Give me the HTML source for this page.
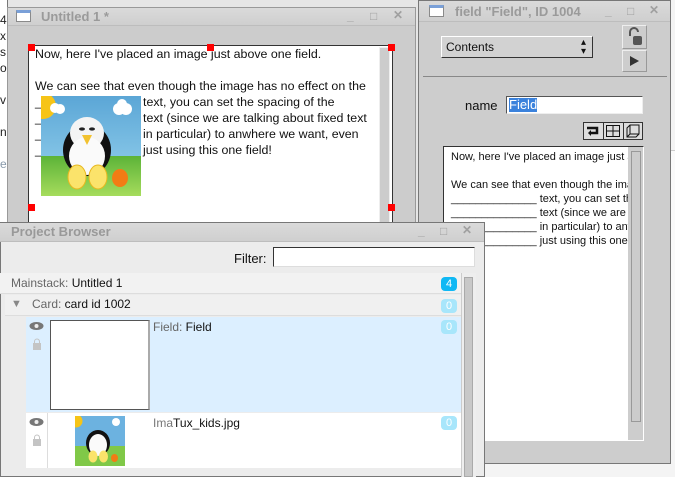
<!DOCTYPE html>
<html><head><meta charset="utf-8"><style>
*{box-sizing:border-box;margin:0;padding:0}
body{width:675px;height:477px;overflow:hidden;position:relative;background:#e6e6e6;font-family:"Liberation Sans",sans-serif;font-size:12px;color:#111}
.abs{position:absolute}
.tb{position:absolute;background:linear-gradient(#dadada,#cfcfcf);border-bottom:1px solid #bdbdbd;color:#9a9a9a;font-weight:bold;font-size:13px}
.wico{position:absolute;width:15px;height:12px;border:1px solid #8a8a8a;background:#fff;border-top:3px solid #7aa0d8}
.ctl{position:absolute;color:#a0a0a0;font-size:12px}
.red{position:absolute;width:7px;height:7px;background:#f00}
.badge{position:absolute;width:16px;height:14px;border-radius:4px;background:#a8e6fb;color:#fff;text-align:center;font-size:11px;line-height:14px}
.ln{position:absolute;font-size:12.4px;white-space:pre}
</style></head><body>
<div class="abs" style="left:0;top:0;width:8px;height:477px;background:#fff;border-right:1px solid #777"></div>
<div class="abs" style="left:0;top:12px;font-size:12px;line-height:16px;color:#222;width:8px;overflow:hidden">4<br>x<br>s<br>ol<br><br>v<br><br>n<br><br><span style="color:#89a">e</span></div>
<div class="abs" style="left:670px;top:0;width:5px;height:477px;background:#f4f4f4"></div>
<div class="abs" style="left:670px;top:150px;width:5px;height:300px;background:#fafafa;border-top:1px solid #ccc"></div>
<div class="abs" style="left:0;top:462px;width:675px;height:15px;background:#f4f4f4"></div>

<!-- Untitled 1 window -->
<div class="abs" style="left:7px;top:7px;width:409px;height:230px;background:#cccccc;border:1px solid #999"></div>
<div class="tb" style="left:8px;top:8px;width:407px;height:18px"><div class="wico" style="left:8px;top:2px"></div><span style="position:absolute;left:33px;top:1px">Untitled 1 *</span>
<span class="ctl" style="left:339px;top:1px">_</span><span class="ctl" style="left:362px;top:1px">□</span><span class="ctl" style="left:385px;top:0">✕</span></div>
<div class="abs" style="left:28px;top:45px;width:365px;height:190px;background:#fff;border:1px solid #333"></div>
<div class="abs" style="left:379px;top:47px;width:11px;height:180px;background:#ccc;border:1px solid #eee"></div>
<div class="ln" style="left:35px;top:47px">Now, here I've placed an image just above one field.</div>
<div class="ln" style="left:35px;top:79px">We can see that even though the image has no effect on the</div>
<div class="ln" style="left:35px;top:95px">__</div><div class="ln" style="left:143px;top:95px">text, you can set the spacing of the</div>
<div class="ln" style="left:35px;top:111px">__</div><div class="ln" style="left:143px;top:111px">text (since we are talking about fixed text</div>
<div class="ln" style="left:35px;top:127px">__</div><div class="ln" style="left:143px;top:127px">in particular) to anwhere we want, even</div>
<div class="ln" style="left:35px;top:143px">__</div><div class="ln" style="left:143px;top:143px">just using this one field!</div>
<svg class="abs" style="left:41px;top:96px" width="100" height="100" viewBox="0 0 100 100">
<defs><linearGradient id="sk" x1="0" y1="0" x2="0" y2="1"><stop offset="0" stop-color="#5ba6d6"/><stop offset="1" stop-color="#9bd6f0"/></linearGradient>
<linearGradient id="gr" x1="0" y1="0" x2="0" y2="1"><stop offset="0" stop-color="#5cb338"/><stop offset="1" stop-color="#a6dc5c"/></linearGradient></defs>
<rect width="100" height="100" fill="url(#sk)"/><rect y="60" width="100" height="40" fill="url(#gr)"/>
<circle cx="2" cy="10" r="13" fill="#f6c417"/>
<circle cx="14" cy="12" r="5" fill="#fff"/><circle cx="19" cy="13" r="5" fill="#fff"/>
<circle cx="78" cy="13" r="6" fill="#fff"/><circle cx="85" cy="13" r="6" fill="#fff"/><circle cx="81" cy="8" r="5" fill="#fff"/>
<ellipse cx="46" cy="54" rx="24" ry="26" fill="#111"/>
<ellipse cx="46" cy="37" rx="17" ry="16" fill="#f4f4f4"/>
<ellipse cx="46" cy="60" rx="18" ry="19" fill="#fafafa"/>
<path d="M41 39l5 10 5-10z" fill="#f2c230"/>
<ellipse cx="41" cy="33" rx="3" ry="1.6" fill="#222"/><ellipse cx="51" cy="33" rx="3" ry="1.6" fill="#222"/>
<ellipse cx="36" cy="81" rx="9" ry="12" fill="#fbe36b" stroke="#e8b820"/>
<ellipse cx="57" cy="81" rx="9" ry="12" fill="#fbe36b" stroke="#e8b820"/>
<ellipse cx="79" cy="82" rx="8" ry="9" fill="#f27c14"/>
</svg>
<div class="red" style="left:28px;top:44px"></div><div class="red" style="left:207px;top:44px"></div><div class="red" style="left:388px;top:44px"></div>
<div class="red" style="left:28px;top:204px"></div><div class="red" style="left:388px;top:204px"></div>

<!-- Inspector -->
<div class="abs" style="left:418px;top:0;width:253px;height:464px;background:#cdcdcd;border:1px solid #777"></div>
<div class="tb" style="left:419px;top:1px;width:251px;height:21px"><div class="wico" style="left:10px;top:4px"></div><span style="position:absolute;left:36px;top:3px">field "Field", ID 1004</span>
<span class="ctl" style="left:186px;top:3px">_</span><span class="ctl" style="left:208px;top:3px">□</span><span class="ctl" style="left:230px;top:2px">✕</span></div>
<div class="abs" style="left:441px;top:36px;width:152px;height:22px;background:#d2d2d2;border:1px solid #fff;border-right-color:#333;border-bottom-color:#333;padding:3px 0 0 4px">Contents<span style="position:absolute;right:6px;top:1px;font-size:10px;line-height:9px">▴<br>▾</span></div>
<div class="abs" style="left:622px;top:25px;width:25px;height:24px;border:1px solid #eee;border-right-color:#999;border-bottom-color:#999"></div>
<svg class="abs" style="left:626px;top:27px" width="18" height="20" viewBox="0 0 18 20"><path d="M4 9V5a4 4 0 0 1 8 0" fill="none" stroke="#555" stroke-width="2"/><rect x="7" y="9" width="9" height="9" rx="2" fill="#555"/></svg>
<div class="abs" style="left:622px;top:50px;width:25px;height:22px;border:1px solid #eee;border-right-color:#999;border-bottom-color:#999"></div>
<svg class="abs" style="left:628px;top:55px" width="12" height="12"><path d="M2 1L11 6L2 11Z" fill="#333"/></svg>
<div class="abs" style="left:423px;top:76px;width:244px;height:1px;background:#888"></div>
<div class="abs" style="left:465px;top:98px;font-size:13px">name</div>
<div class="abs" style="left:506px;top:96px;width:137px;height:18px;background:#fff;border:1px solid #555;border-right-color:#eee;border-bottom-color:#eee"><span style="position:absolute;left:2px;top:1px;background:#3b82dc;color:#fff;font-size:13px;line-height:14px">Field</span></div>
<div class="abs" style="left:583px;top:122px;width:60px;height:18px;border:1px solid #333;background:#ddd"></div>
<div class="abs" style="left:603px;top:122px;width:1px;height:18px;background:#333"></div><div class="abs" style="left:623px;top:122px;width:1px;height:18px;background:#333"></div>
<svg class="abs" style="left:586px;top:125px" width="14" height="12"><path d="M1 3H11V8H4" fill="none" stroke="#111" stroke-width="2.5"/><path d="M5 5L2 8L5 11Z" fill="#111"/></svg>
<svg class="abs" style="left:606px;top:125px" width="14" height="12"><rect x="0.5" y="0.5" width="13" height="11" fill="none" stroke="#111"/><path d="M7 0V12M0 6H14" stroke="#111"/></svg>
<svg class="abs" style="left:626px;top:124px" width="14" height="14"><path d="M4 1H13V10L10 13H1V4Z M4 1V10H13 M4 10L1 13" fill="none" stroke="#111"/></svg>
<div class="abs" style="left:443px;top:146px;width:201px;height:295px;background:#fff;border:1px solid #333;border-right-color:#fff;border-bottom-color:#fff;overflow:hidden">
<div style="position:absolute;left:7px;top:3px;font-size:11px;line-height:14px;white-space:pre">Now, here I've placed an image just above

We can see that even though the image
______________ text, you can set the
______________ text (since we are
______________ in particular) to anwh
______________ just using this one fie</div>
<div style="position:absolute;left:184px;top:0;width:16px;height:295px;background:#cdcdcd"></div>
<div style="position:absolute;left:187px;top:4px;width:10px;height:271px;background:#ccc;border:1px solid #999"></div></div>

<!-- Project Browser -->
<div class="abs" style="left:0;top:222px;width:485px;height:255px;background:#ececec;border:1px solid #777"></div>
<div class="tb" style="left:0;top:223px;width:484px;height:19px;color:#999"><span style="position:absolute;left:11px;top:1px">Project Browser</span>
<span class="ctl" style="left:418px;top:1px">_</span><span class="ctl" style="left:440px;top:1px">□</span><span class="ctl" style="left:462px;top:0">✕</span></div>
<div class="abs" style="left:234px;top:251px;font-size:13px">Filter:</div>
<div class="abs" style="left:273px;top:247px;width:202px;height:20px;background:#fff;border:1px solid #333;border-right-color:#ddd;border-bottom-color:#ddd"></div>
<div class="abs" style="left:0;top:273px;width:461px;height:21px;background:#f2f2f2;border-bottom:1px solid #ddd"></div>
<div class="abs" style="left:11px;top:276px;font-size:12px"><span style="color:#666">Mainstack:</span> Untitled 1</div>
<div class="badge" style="left:441px;top:277px;background:#10b8f4">4</div>
<div class="abs" style="left:5px;top:295px;width:456px;height:21px;background:#f0f0f0;border-bottom:1px solid #ddd"></div>
<div class="abs" style="left:11px;top:298px;font-size:11px;color:#888">▼</div>
<div class="abs" style="left:32px;top:297px"><span style="color:#666">Card:</span> card id 1002</div>
<div class="badge" style="left:441px;top:299px">0</div>
<div class="abs" style="left:26px;top:317px;width:435px;height:95px;background:#dcefff"></div>
<div class="abs" style="left:50px;top:320px;width:100px;height:90px;background:#fff;border:1px solid #555;border-right:2px solid #aaa"></div>
<svg class="abs" style="left:29px;top:321px" width="15" height="10"><ellipse cx="7.5" cy="5" rx="7" ry="4" fill="#777"/><circle cx="7.5" cy="5" r="2" fill="#eee"/></svg>
<svg class="abs" style="left:33px;top:338px" width="8" height="12"><path d="M1.5 5V3.5a2.5 2.5 0 0 1 5 0V5" fill="none" stroke="#c4c4c4"/><rect x="0" y="5" width="8" height="7" fill="#c4c4c4"/></svg>
<div class="abs" style="left:153px;top:320px"><span style="color:#666">Field:</span> Field</div>
<div class="badge" style="left:441px;top:320px">0</div>
<div class="abs" style="left:26px;top:413px;width:435px;height:55px;background:#fff"></div>
<div class="abs" style="left:47px;top:413px;width:1px;height:55px;background:#ddd"></div>
<svg class="abs" style="left:29px;top:417px" width="15" height="10"><ellipse cx="7.5" cy="5" rx="7" ry="4" fill="#777"/><circle cx="7.5" cy="5" r="2" fill="#eee"/></svg>
<svg class="abs" style="left:33px;top:434px" width="8" height="12"><path d="M1.5 5V3.5a2.5 2.5 0 0 1 5 0V5" fill="none" stroke="#c4c4c4"/><rect x="0" y="5" width="8" height="7" fill="#c4c4c4"/></svg>
<svg class="abs" style="left:75px;top:416px" width="50" height="50" viewBox="0 0 100 100">
<rect width="100" height="100" fill="#6cb2e0"/><rect y="60" width="100" height="40" fill="#80c848"/>
<circle cx="2" cy="10" r="13" fill="#f6c417"/><circle cx="82" cy="12" r="8" fill="#fff"/>
<ellipse cx="46" cy="54" rx="24" ry="26" fill="#111"/><ellipse cx="46" cy="58" rx="18" ry="22" fill="#fafafa"/>
<ellipse cx="36" cy="81" rx="9" ry="12" fill="#fbe36b"/><ellipse cx="57" cy="81" rx="9" ry="12" fill="#fbe36b"/>
<ellipse cx="79" cy="84" rx="7" ry="8" fill="#f27c14"/></svg>
<div class="abs" style="left:153px;top:416px"><span style="color:#777">Ima</span>Tux_kids.jpg</div>
<div class="badge" style="left:441px;top:416px">0</div>
<div class="abs" style="left:461px;top:273px;width:15px;height:204px;background:#eee;border-left:1px solid #ccc"></div>
<div class="abs" style="left:464px;top:277px;width:9px;height:200px;background:#c8c8c8;border:1px solid #aaa"></div>
</body></html>
